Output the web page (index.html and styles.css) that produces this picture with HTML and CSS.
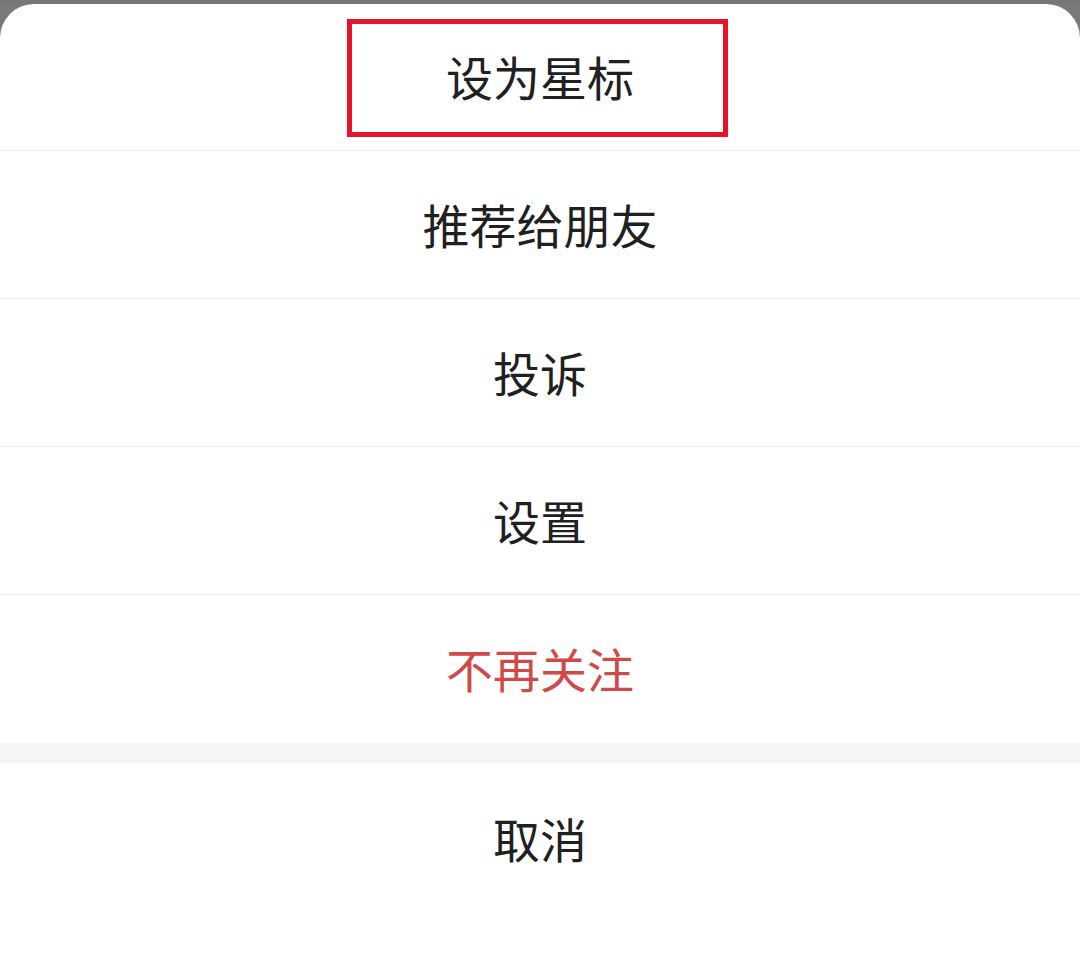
FILE: index.html
```html
<!DOCTYPE html>
<html lang="zh-CN">
<head>
<meta charset="utf-8">
<link rel="stylesheet" href="styles.css">
</head>
<body>
<div class="backdrop"></div>
<div class="sheet">
  <div class="menu">
    <div class="item item-first">设为星标<span class="highlight"></span></div>
    <div class="item">推荐给朋友</div>
    <div class="item">投诉</div>
    <div class="item">设置</div>
    <div class="item item-danger item-last">不再关注</div>
  </div>
  <div class="gap"></div>
  <div class="cancel">取消</div>
</div>
</body>
</html>
```
FILE: styles.css
```css
html, body {
  margin: 0;
  padding: 0;
  width: 1080px;
  height: 972px;
  overflow: hidden;
  background: #7a7a7a;
  font-family: "Noto Sans CJK SC", "Noto Sans", sans-serif;
}
.backdrop {
  height: 4px;
  background: #777;
}
.sheet {
  height: 968px;
  background: #fff;
  border-radius: 34px 34px 0 0;
  display: flex;
  flex-direction: column;
}
.menu {
  display: flex;
  flex-direction: column;
}
.item {
  height: 144px;
  padding-bottom: 3px;
  border-bottom: 1px solid #ececec;
  display: flex;
  align-items: center;
  justify-content: center;
  font-size: 47px;
  color: #202020;
  position: relative;
}
.item-first {
  height: 143px;
}
.item-last {
  border-bottom: none;
  padding-bottom: 4px;
}
.item-danger {
  color: #d14a4a;
}
.highlight {
  position: absolute;
  left: 347px;
  top: 15px;
  width: 381px;
  height: 118px;
  box-sizing: border-box;
  border: 5px solid #e5142b;
}
.gap {
  height: 20px;
  background: #f5f5f5;
}
.cancel {
  height: 149px;
  padding-bottom: 3px;
  display: flex;
  align-items: center;
  justify-content: center;
  font-size: 47px;
  color: #202020;
}
```
